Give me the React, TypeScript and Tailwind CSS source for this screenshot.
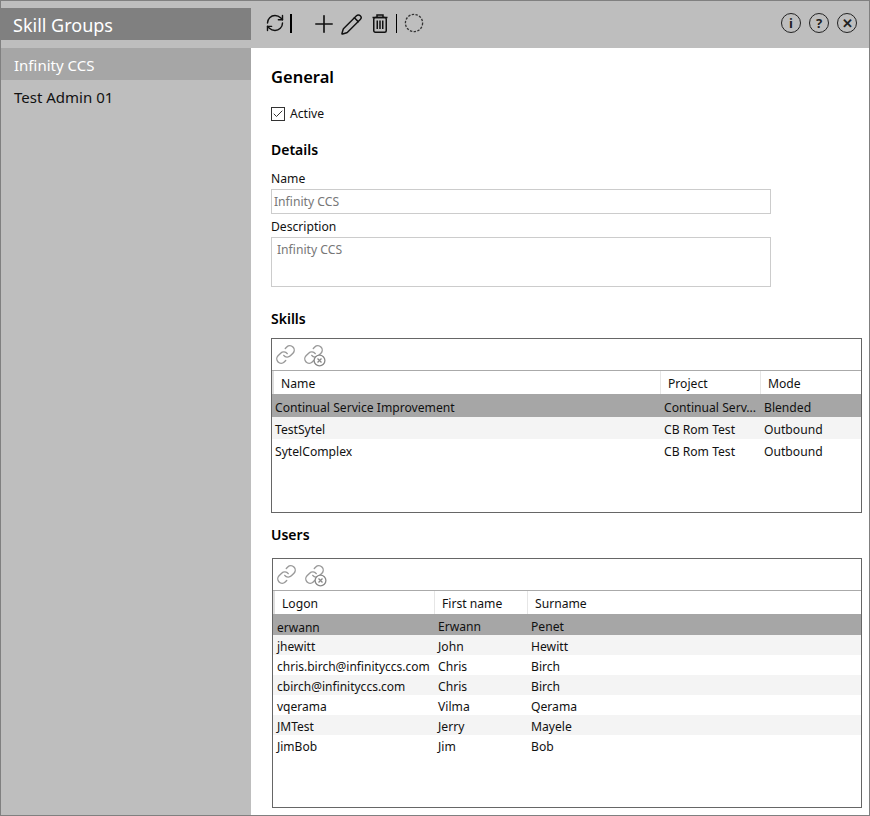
import React from 'react';
import { RefreshCw, Plus, Pencil, Link, Check } from 'lucide-react';

const skills = [
  { name: 'Continual Service Improvement', project: 'Continual Serv...', mode: 'Blended' },
  { name: 'TestSytel', project: 'CB Rom Test', mode: 'Outbound' },
  { name: 'SytelComplex', project: 'CB Rom Test', mode: 'Outbound' },
];

const users = [
  { logon: 'erwann', first: 'Erwann', last: 'Penet' },
  { logon: 'jhewitt', first: 'John', last: 'Hewitt' },
  { logon: 'chris.birch@infinityccs.com', first: 'Chris', last: 'Birch' },
  { logon: 'cbirch@infinityccs.com', first: 'Chris', last: 'Birch' },
  { logon: 'vqerama', first: 'Vilma', last: 'Qerama' },
  { logon: 'JMTest', first: 'Jerry', last: 'Mayele' },
  { logon: 'JimBob', first: 'Jim', last: 'Bob' },
];

const rowBg = (i: number) => (i === 0 ? 'bg-[#a6a6a6]' : i % 2 === 1 ? 'bg-[#f4f4f4]' : 'bg-white');

const TrashIcon = () => (
  <svg width="16" height="19" viewBox="0 0 16 19" fill="none" stroke="#111" strokeWidth="1.5">
    <path d="M0.5 3.5h15M5 3.5V1h6v2.5" />
    <rect x="1.75" y="3.5" width="12.5" height="14.75" rx="1.5" />
    <path d="M5.25 6.5v8.5M8 6.5v8.5M10.75 6.5v8.5" />
  </svg>
);

const DashedCircle = () => (
  <svg width="20" height="20" viewBox="0 0 20 20" fill="none" stroke="#333" strokeWidth="1.3" strokeDasharray="2.4 1.4">
    <circle cx="10" cy="10" r="8.6" />
  </svg>
);

const RoundButton = ({ children }: { children: React.ReactNode }) => (
  <div className="flex h-5 w-5 items-center justify-center rounded-full border-[1.5px] border-[#222] text-[13px] leading-none font-bold text-[#222]">
    {children}
  </div>
);

const LinkButtons = () => (
  <div className="flex items-center gap-[7px] pl-[3px]">
    <Link size={21} strokeWidth={1.6} className="text-[#999]" />
    <div className="relative h-[21px] w-[21px]">
      <Link size={21} strokeWidth={1.6} className="text-[#999]" />
      <svg width="13" height="13" viewBox="0 0 13 13" fill="white" stroke="#888" strokeWidth="1.3" className="absolute -right-[2px] -bottom-[2px]">
        <circle cx="6.5" cy="6.5" r="5.4" />
        <path d="M4.5 4.5l4 4M8.5 4.5l-4 4" />
      </svg>
    </div>
  </div>
);

const HeaderCell = ({ label, className }: { label: string; className: string }) => (
  <div className={`flex h-full shrink-0 items-center border-r border-[#e6e6e6] pt-[3px] ${className}`}>{label}</div>
);

export default function App() {
  return (
    <div
      className="flex h-[816px] w-[870px] flex-col overflow-hidden border border-[#808080] bg-white text-[12.15px] text-[#111]"
      style={{ fontFamily: '"Noto Sans", "Open Sans", sans-serif' }}
    >
      <div className="flex h-[47px] shrink-0 bg-[#bebebe]">
        <div className="w-[250px] shrink-0 pt-[7px]">
          <div className="flex h-8 items-center bg-[#808080] pt-[2px] pl-[12px] text-[18px] text-white">Skill Groups</div>
        </div>
        <div className="flex flex-1 items-start pt-[12px] pl-[14px]">
          <RefreshCw size={20} strokeWidth={1.7} className="text-[#111]" />
          <div className="mt-[1px] ml-[5px] h-[19px] w-[1.5px] bg-black" />
          <Plus size={28} strokeWidth={1.4} className="-mt-[3px] ml-[18px] text-[#111]" />
          <Pencil size={23} strokeWidth={1.5} className="ml-[2px] text-[#111]" />
          <div className="mt-[1px] ml-[9px]"><TrashIcon /></div>
          <div className="mt-[1px] ml-[8px] h-[19px] w-[1.5px] bg-black" />
          <div className="ml-[7px]"><DashedCircle /></div>
          <div className="mr-[12px] ml-auto flex gap-2">
            <RoundButton>i</RoundButton>
            <RoundButton>?</RoundButton>
            <RoundButton>✕</RoundButton>
          </div>
        </div>
      </div>

      <div className="flex min-h-0 flex-1">
        <div className="w-[250px] shrink-0 bg-[#bebebe] text-[15px]">
          <div className="flex h-8 items-center bg-[#a6a6a6] pt-[2px] pl-[13px] text-white">Infinity CCS</div>
          <div className="flex h-8 items-center pt-[2px] pl-[13px] text-[#111]">Test Admin 01</div>
        </div>

        <div className="flex-1 pt-[16px] pl-[20px]">
          <h1 className="h-[26px] text-[16.5px] leading-[26px] font-semibold text-black">General</h1>
          <div className="mt-[14px] flex h-[20px] items-center gap-[5px]">
            <div className="flex h-[14px] w-[14px] items-center justify-center border border-[#333]">
              <Check size={12} strokeWidth={2} className="text-[#333]" />
            </div>
            <span>Active</span>
          </div>

          <h2 className="mt-[15px] h-[22px] text-[14px] leading-[22px] font-semibold text-black">Details</h2>
          <div className="mt-[9px] h-[18px] leading-[18px]">Name</div>
          <div className="mt-[1px] flex h-[25px] w-[500px] items-center border border-[#ccc] pt-[2px] pl-[2px] text-[#777]">Infinity CCS</div>
          <div className="mt-[4px] h-[18px] leading-[18px]">Description</div>
          <div className="mt-[1px] h-[50px] w-[500px] border border-[#ccc] pt-[3px] pl-[5px] text-[#777]">Infinity CCS</div>

          <h2 className="mt-[21px] h-[22px] text-[14px] leading-[22px] font-semibold text-black">Skills</h2>
          <div className="mt-[8px] h-[175px] w-[591px] border border-[#666]">
            <div className="flex h-[32px] items-center border-b border-[#aaa]"><LinkButtons /></div>
            <div className="flex h-[23px] border-l-2 border-[#ddd]">
              <HeaderCell label="Name" className="w-[387px] pl-[7px]" />
              <HeaderCell label="Project" className="w-[100px] pl-[7px]" />
              <div className="flex items-center pt-[3px] pl-[7px]">Mode</div>
            </div>
            {skills.map((s, i) => (
              <div key={s.name} className={`flex items-center ${i === 0 ? 'h-[23px] pt-[5px]' : 'h-[22px] pt-[4px]'} ${rowBg(i)}`}>
                <div className="w-[392px] pl-[3px]">{s.name}</div>
                <div className="w-[100px]">{s.project}</div>
                <div>{s.mode}</div>
              </div>
            ))}
          </div>

          <h2 className="mt-[11px] h-[22px] text-[14px] leading-[22px] font-semibold text-black">Users</h2>
          <div className="mt-[12px] ml-[1px] h-[250px] w-[590px] border border-[#666]">
            <div className="flex h-[32px] items-center border-b border-[#aaa]"><LinkButtons /></div>
            <div className="flex h-[23px] border-l-2 border-[#ddd]">
              <HeaderCell label="Logon" className="w-[160px] pl-[7px]" />
              <HeaderCell label="First name" className="w-[93px] pl-[7px]" />
              <div className="flex items-center pt-[3px] pl-[7px]">Surname</div>
            </div>
            {users.map((u, i) => (
              <div key={u.logon} className={`flex items-center ${i === 0 ? 'h-[21px] pt-[6px]' : 'h-5 pt-[4px]'} ${rowBg(i)}`}>
                <div className="w-[165px] pl-[4px] text-[12px]">{u.logon}</div>
                <div className="w-[93px]">{u.first}</div>
                <div>{u.last}</div>
              </div>
            ))}
          </div>
        </div>
      </div>
    </div>
  );
}
